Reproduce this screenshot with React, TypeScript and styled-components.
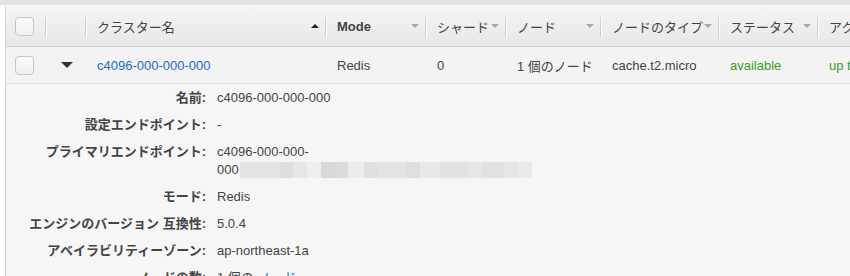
import React from "react";
import styled, { createGlobalStyle } from "styled-components";

const Global = createGlobalStyle`
  html, body { margin: 0; padding: 0; background: #ffffff; }
  body {
    font-family: "Liberation Sans", Arial, "Noto Sans CJK JP", sans-serif;
    font-size: 13px;
    color: #444;
    overflow: hidden;
  }
`;

const TopStrip = styled.div`
  height: 5px;
  background: #e3e3e3;
  border-bottom: 1px solid #f7f7f7;
`;

const Frame = styled.div`
  margin-left: 5px;
  border-left: 1px solid #d5d5d5;
`;

const COLS = "40px 40px 240px 100px 80px 95px 118px 99px 1fr";

const HeaderRow = styled.div`
  display: grid;
  grid-template-columns: ${COLS};
  height: 40px;
  background: linear-gradient(#f5f5f5, #e7e7e7);
  border-bottom: 1px solid #cfcfcf;
  white-space: nowrap;
  overflow: hidden;
`;

const HeadCell = styled.div<{ $sep?: boolean }>`
  position: relative;
  display: flex;
  align-items: center;
  padding: 0 7px 0 11px;
  font-weight: ${(p) => (p.$bold ? "bold" : "normal")};
  color: #444;
  font-size: 13px;
  &::before {
    content: "";
    display: ${(p) => (p.$sep ? "block" : "none")};
    position: absolute;
    left: -1px;
    top: 11px;
    height: 21px;
    width: 1px;
    background: #d0d0d0;
    box-shadow: 1px 0 0 #fbfbfb;
  }
` as any;

const HeadLabel = styled.span`
  flex: 1;
  overflow: hidden;
`;

const Arrow = styled.span<{ $up?: boolean; $dark?: boolean }>`
  width: 0;
  height: 0;
  border-left: 4px solid transparent;
  border-right: 4px solid transparent;
  ${(p) =>
    p.$up
      ? `border-bottom: 4px solid ${p.$dark ? "#222" : "#aaa"};`
      : `border-top: 4px solid ${p.$dark ? "#222" : "#aaa"};`}
  flex: none;
`;

const CheckCell = styled.div`
  display: flex;
  align-items: center;
  padding-left: 9px;
`;

const Checkbox = styled.span`
  display: block;
  width: 17px;
  height: 17px;
  border: 1px solid #c6c6c6;
  border-radius: 4px;
  background: linear-gradient(#fbfbfb, #efefef);
`;

const DataRow = styled.div`
  display: grid;
  grid-template-columns: ${COLS};
  height: 36px;
  background: #f3f3f3;
  border-bottom: 1px solid #dedede;
  white-space: nowrap;
  overflow: hidden;
`;

const Cell = styled.div<{ $color?: string }>`
  display: flex;
  align-items: center;
  padding-left: 11px;
  color: ${(p) => p.$color || "#444"};
  overflow: hidden;
`;

const ExpandCell = styled.div`
  display: flex;
  align-items: center;
  justify-content: center;
`;

const Caret = styled.span`
  width: 0;
  height: 0;
  border-left: 6px solid transparent;
  border-right: 6px solid transparent;
  border-top: 6px solid #333;
  margin-left: 1px;
`;

const Detail = styled.div`
  background: #f6f6f6;
  padding-top: 5px;
  padding-bottom: 20px;
  display: grid;
  grid-template-columns: 200px 1fr;
  column-gap: 11px;
  row-gap: 9px;
  line-height: 18px;
`;

const Label = styled.div`
  text-align: right;
  font-weight: bold;
  color: #444;
  white-space: nowrap;
`;

const Value = styled.div`
  color: #444;
`;

const Line = styled.div`
  display: flex;
  align-items: center;
`;

const Blur = styled.span`
  display: flex;
  height: 16px;
  margin-left: 1px;
`;

const BlurBit = styled.span<{ $w: number; $c: string }>`
  display: block;
  width: ${(p) => p.$w}px;
  background: ${(p) => p.$c};
`;

const blurBits: [number, string][] = [
  [40, "#e4e4e4"],
  [13, "#dedede"],
  [14, "#e6e6e6"],
  [14, "#eeeeee"],
  [14, "#d9d9d9"],
  [13, "#dcdcdc"],
  [16, "#ececec"],
  [14, "#e0e0e0"],
  [28, "#e3e3e3"],
  [14, "#dfdfdf"],
  [20, "#e8e8e8"],
  [28, "#e2e2e2"],
  [14, "#e7e7e7"],
  [22, "#e1e1e1"],
  [14, "#e5e5e5"],
  [14, "#eaeaea"],
];

const Link = styled.span`
  color: #1e6bc0;
`;

const headers: { label: string; arrow?: "up" | "down"; bold?: boolean }[] = [
  { label: "クラスター名", arrow: "up" },
  { label: "Mode", arrow: "down", bold: true },
  { label: "シャード", arrow: "down" },
  { label: "ノード", arrow: "down" },
  { label: "ノードのタイプ", arrow: "down" },
  { label: "ステータス", arrow: "down" },
  { label: "アクション" },
];

const details: [string, React.ReactNode][] = [
  ["名前:", "c4096-000-000-000"],
  ["設定エンドポイント:", "-"],
  [
    "プライマリエンドポイント:",
    <>
      <div>c4096-000-000-</div>
      <Line>
        000
        <Blur>
          {blurBits.map(([w, c], i) => (
            <BlurBit key={i} $w={w} $c={c} />
          ))}
        </Blur>
      </Line>
    </>,
  ],
  ["モード:", "Redis"],
  ["エンジンのバージョン 互換性:", "5.0.4"],
  ["アベイラビリティーゾーン:", "ap-northeast-1a"],
  [
    "ノードの数:",
    <>
      1 個の <Link>ノード</Link>
    </>,
  ],
];

export default function App() {
  return (
    <>
      <Global />
      <TopStrip />
      <Frame>
        <HeaderRow>
          <CheckCell>
            <Checkbox />
          </CheckCell>
          <HeadCell $sep />
          {headers.map((h, i) => (
            <HeadCell key={i} $sep $bold={h.bold}>
              <HeadLabel>{h.label}</HeadLabel>
              {h.arrow && <Arrow $up={h.arrow === "up"} $dark={h.arrow === "up"} />}
            </HeadCell>
          ))}
        </HeaderRow>
        <DataRow>
          <CheckCell>
            <Checkbox />
          </CheckCell>
          <ExpandCell>
            <Caret />
          </ExpandCell>
          <Cell>
            <Link>c4096-000-000-000</Link>
          </Cell>
          <Cell>Redis</Cell>
          <Cell>0</Cell>
          <Cell>1 個のノード</Cell>
          <Cell>cache.t2.micro</Cell>
          <Cell $color="#3a9b29">available</Cell>
          <Cell $color="#3a9b29">up to date</Cell>
        </DataRow>
        <Detail>
          {details.map(([l, v], i) => (
            <React.Fragment key={i}>
              <Label>{l}</Label>
              <Value>{v}</Value>
            </React.Fragment>
          ))}
        </Detail>
      </Frame>
    </>
  );
}
